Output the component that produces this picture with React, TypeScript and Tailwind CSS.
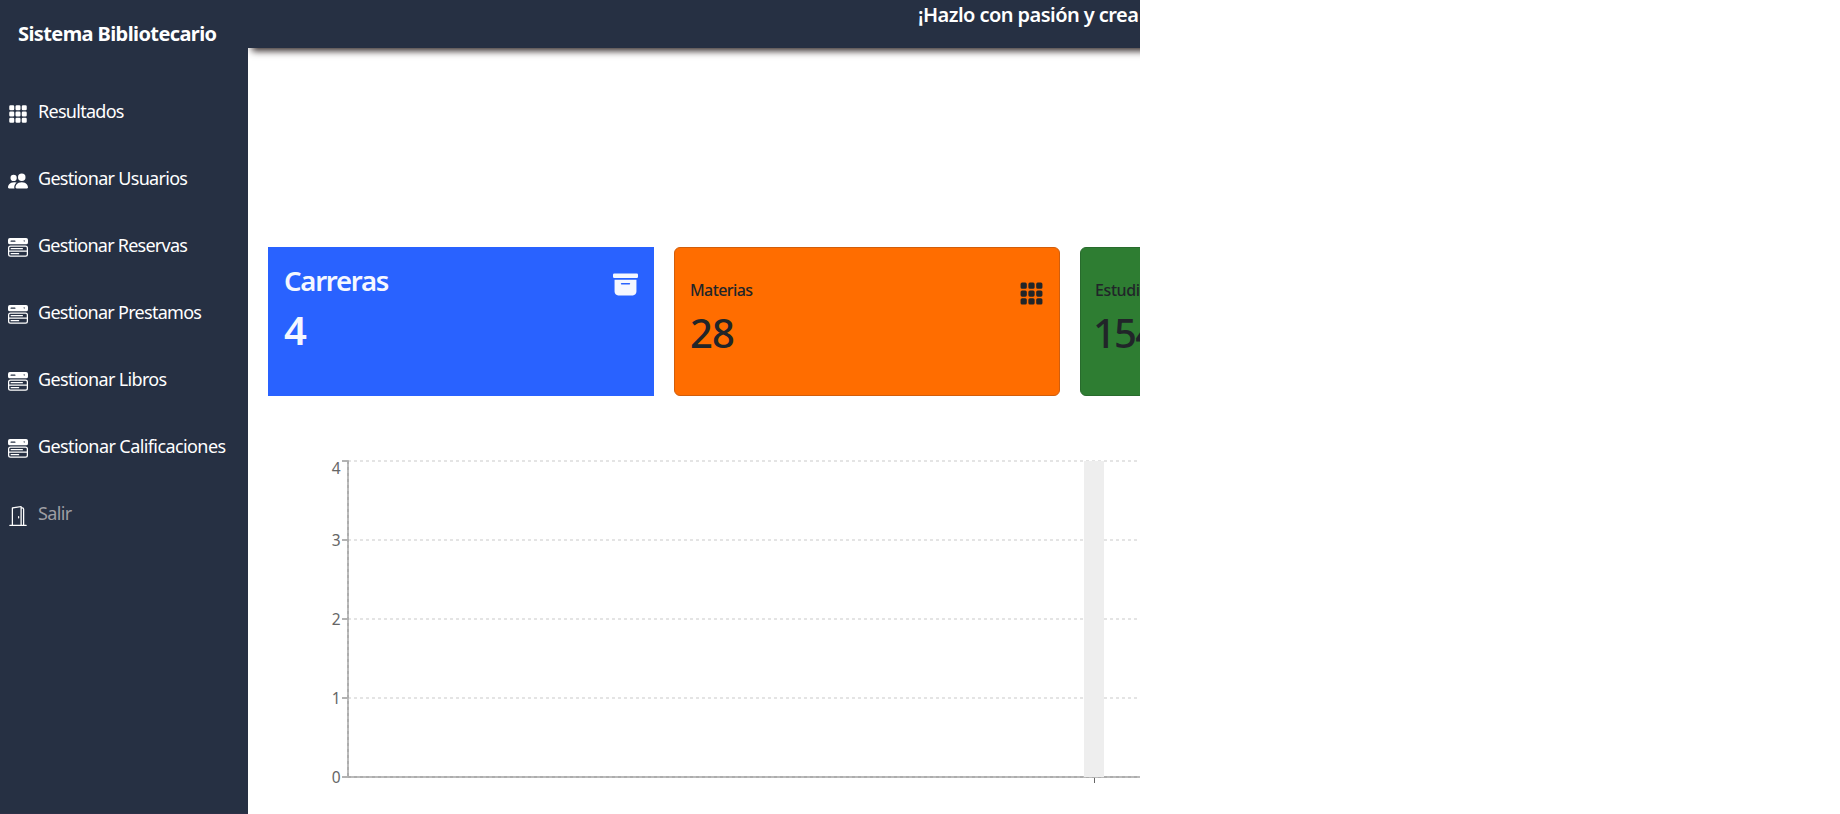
import { BsFillGrid3X3GapFill, BsPeopleFill, BsMenuButtonWideFill, BsDoorOpen, BsFillArchiveFill } from 'react-icons/bs';
import type { IconType } from 'react-icons';

type MenuItem = { label: string; icon: IconType; muted?: boolean; track: string };

const menu: MenuItem[] = [
  { label: 'Resultados', icon: BsFillGrid3X3GapFill, track: 'tracking-[-0.72px]' },
  { label: 'Gestionar Usuarios', icon: BsPeopleFill, track: 'tracking-[-0.7px]' },
  { label: 'Gestionar Reservas', icon: BsMenuButtonWideFill, track: 'tracking-[-0.75px]' },
  { label: 'Gestionar Prestamos', icon: BsMenuButtonWideFill, track: 'tracking-[-0.72px]' },
  { label: 'Gestionar Libros', icon: BsMenuButtonWideFill, track: 'tracking-[-0.65px]' },
  { label: 'Gestionar Calificaciones', icon: BsMenuButtonWideFill, track: 'tracking-[-0.59px]' },
  { label: 'Salir', icon: BsDoorOpen, muted: true, track: 'tracking-[-0.6px]' },
];

function Sidebar() {
  return (
    <aside className="flex h-full w-[248px] shrink-0 flex-col border-b border-[#2d3047] bg-[#263043] text-white">
      <h3 className="mt-[20px] h-[28px] pl-[18px] text-[20px] leading-[28px] font-bold tracking-[-0.6px] whitespace-nowrap">
        Sistema Bibliotecario
      </h3>
      <ul className="mt-[30px]">
        {menu.map(({ label, icon: Icon, muted, track }) => (
          <li key={label} className="flex h-[67px] items-center pl-[8px]">
            <Icon className="mt-[5px] size-[20px] shrink-0" />
            <span className={`ml-[10px] text-[18px] whitespace-nowrap ${track} ${muted ? 'text-[#9e9ea4]' : ''}`}>{label}</span>
          </li>
        ))}
      </ul>
    </aside>
  );
}

const ticks = [
  { value: 4, y: 21, label: 34 },
  { value: 3, y: 100, label: 106 },
  { value: 2, y: 179, label: 185 },
  { value: 1, y: 258, label: 264 },
  { value: 0, y: 337, label: 343 },
];

function Chart() {
  return (
    <svg className="block h-[374px] w-[892px]" viewBox="0 0 892 374">
      <g strokeWidth="2" stroke="#e4e4e4" strokeDasharray="3 3">
        {ticks.map((t) => (
          <line key={t.value} x1="100" x2="892" y1={t.y} y2={t.y} />
        ))}
      </g>
      <rect x="836" y="21" width="20" height="316" fill="#eeeeee" />
      <g strokeWidth="2" stroke="#bbbbbb">
        <line x1="94" x2="892" y1="337" y2="337" />
        <line x1="100" x2="100" y1="20" y2="338" />
        {ticks.map((t) => (
          <line key={t.value} x1="94" x2="100" y1={t.y} y2={t.y} stroke="#b3b3b3" />
        ))}
      </g>
      <g strokeWidth="2" stroke="#adadad" strokeDasharray="3 3">
        <line x1="100" x2="892" y1="337" y2="337" />
        <line x1="100" x2="100" y1="21" y2="337" />
      </g>
      <rect x="836" y="336" width="20" height="1" fill="#eeeeee" />
      <line x1="846.5" x2="846.5" y1="338" y2="343" stroke="#666666" />
      <g fill="#666666" fontSize="15.5" textAnchor="end">
        {ticks.map((t) => (
          <text key={t.value} x="92.5" y={t.label}>{t.value}</text>
        ))}
      </g>
    </svg>
  );
}

export default function App() {
  return (
    <div className="h-[814px] w-[1840px] overflow-hidden bg-white font-['Noto_Sans','Open_Sans',sans-serif]">
      <div className="flex h-full w-[1140px] overflow-hidden">
        <Sidebar />
        <div className="flex w-[892px] shrink-0 flex-col overflow-hidden">
          <header className="h-[48px] w-[1592px] shrink-0 bg-[#263043] pl-[670px] shadow-[1px_6px_7px_-3px_#352b2b]">
            <h5 className="pt-[3px] text-[20px] leading-[24px] font-semibold tracking-[-0.55px] whitespace-nowrap text-white">
              ¡Hazlo con pasión y crea
            </h5>
          </header>
          <main className="flex flex-col pt-[199px]">
            <div className="flex gap-[20px] pl-[20px]">
              <section className="h-[149px] w-[386px] shrink-0 bg-[#2962ff] text-[#f5f7ff]">
                <div className="flex justify-between pt-[18px] pr-[16px] pl-[16px]">
                  <h3 className="text-[27.5px] leading-[32px] font-semibold tracking-[-1.25px]">Carreras</h3>
                  <BsFillArchiveFill className="mt-[7px] size-[25px]" />
                </div>
                <h1 className="mt-[9px] pl-[16px] text-[40px] leading-[48px] font-semibold">4</h1>
              </section>
              <section className="h-[149px] w-[386px] shrink-0 rounded-[6px] border border-[#d15e0c] bg-[#ff6d00] text-[#212529]">
                <div className="flex justify-between px-[15px] pt-[31px]">
                  <h3 className="-mt-px h-[28px] text-[16px] leading-[24px] font-medium tracking-[-0.6px]">Materias</h3>
                  <BsFillGrid3X3GapFill className="mt-[2px] size-[25px]" />
                </div>
                <h1 className="mt-[3px] pl-[15px] text-[40px] leading-[48px] font-medium tracking-[-1px]">28</h1>
              </section>
              <section className="h-[149px] w-[386px] shrink-0 rounded-[6px] border border-[#286b2d] bg-[#2e7d32] text-[#212529]">
                <div className="flex px-[14px] pt-[31px]">
                  <h3 className="-mt-px h-[28px] text-[16px] leading-[24px] font-medium tracking-[-0.4px]">Estudiantes</h3>
                </div>
                <h1 className="mt-[3px] pl-[12px] text-[40px] leading-[48px] font-medium tracking-[-1.8px]">154</h1>
              </section>
            </div>
            <div className="mt-[44px]">
              <Chart />
            </div>
          </main>
        </div>
      </div>
    </div>
  );
}
